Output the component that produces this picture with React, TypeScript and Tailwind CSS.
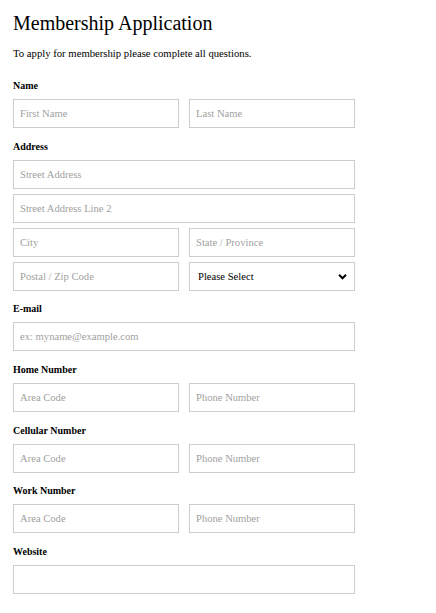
import React from "react";

const inputCls =
  "h-[29px] w-full border border-[#cccccc] bg-white px-[6px] text-[10.6px] text-black placeholder:text-[#9f9f9f] outline-none font-['Liberation_Serif','Times_New_Roman',serif]";

function Field({ placeholder }: { placeholder?: string }) {
  return <input className={inputCls} placeholder={placeholder} />;
}

function Label({ children }: { children: React.ReactNode }) {
  return <div className="mb-[6px] h-[14px] text-[10px] font-bold leading-[14px] text-black">{children}</div>;
}

function Pair({ a, b }: { a: string; b: string }) {
  return (
    <div className="grid grid-cols-2 gap-[10px]">
      <Field placeholder={a} />
      <Field placeholder={b} />
    </div>
  );
}

export default function App() {
  return (
    <div className="min-h-[613px] w-[436px] bg-white px-[13px] pt-[10px] font-['Liberation_Serif','Times_New_Roman',serif]">
      <div className="w-[342px]">
        <h1 className="text-[20px] leading-[26px] text-black">Membership Application</h1>
        <p className="mt-[10px] text-[10.7px] leading-[14px] text-black">
          To apply for membership please complete all questions.
        </p>

        <div className="mt-[19px]">
          <Label>Name</Label>
          <Pair a="First Name" b="Last Name" />
        </div>

        <div className="mt-[12px]">
          <Label>Address</Label>
          <div className="flex flex-col gap-[5px]">
            <Field placeholder="Street Address" />
            <Field placeholder="Street Address Line 2" />
            <Pair a="City" b="State / Province" />
            <div className="grid grid-cols-2 gap-[10px]">
              <Field placeholder="Postal / Zip Code" />
              <div className="relative flex h-[29px] items-center border border-[#cccccc] bg-white px-[8px] text-[10.6px] text-black">
                <span>Please Select</span>
                <svg className="absolute right-[7px] top-1/2 -translate-y-1/2" width="9" height="7" viewBox="0 0 9 7">
                  <path d="M1 1.3 L4.5 4.8 L8 1.3" stroke="black" strokeWidth="2" fill="none" />
                </svg>
              </div>
            </div>
          </div>
        </div>

        <div className="mt-[11px]">
          <Label>E-mail</Label>
          <Field placeholder="ex: myname@example.com" />
        </div>

        <div className="mt-[12px]">
          <Label>Home Number</Label>
          <Pair a="Area Code" b="Phone Number" />
        </div>

        <div className="mt-[12px]">
          <Label>Cellular Number</Label>
          <Pair a="Area Code" b="Phone Number" />
        </div>

        <div className="mt-[11px]">
          <Label>Work Number</Label>
          <Pair a="Area Code" b="Phone Number" />
        </div>

        <div className="mt-[12px]">
          <Label>Website</Label>
          <Field />
        </div>
      </div>
    </div>
  );
}
